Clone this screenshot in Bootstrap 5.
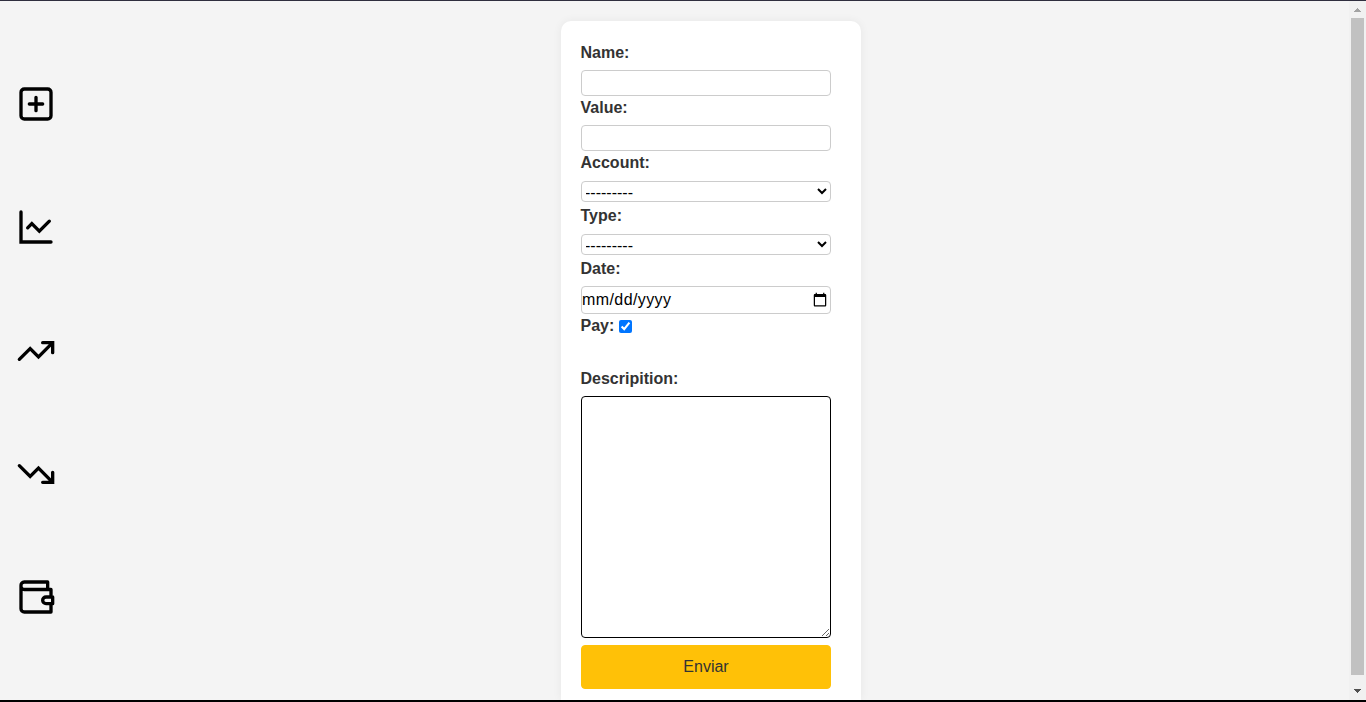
<!DOCTYPE html>
<html lang="en">
<head>
<meta charset="utf-8">
<meta name="viewport" content="width=device-width, initial-scale=1">
<title>New entry</title>
<link href="https://cdn.jsdelivr.net/npm/bootstrap@5.3.0/dist/css/bootstrap.min.css" rel="stylesheet">
<style>
body { font-family: "Liberation Sans", Arial, sans-serif; background: #f4f4f4; color: #333; height: 702px; border-top: 1px solid #2f2e3e; border-bottom: 2px solid #000; }
.side-menu { width: 72px; padding-top: 83px; gap: 83.3px; }
.side-menu svg { width: 40px; height: 40px; fill: none; stroke: #000; stroke-width: 2; stroke-linecap: round; }
.side-menu a { line-height: 0; }
.entry-form { width: 300px; height: 679px; margin: 20px 0 0 489px; padding: 20px 20px 0; background: #fff; border-radius: 10px 10px 0 0; box-shadow: 0 0 10px rgba(0,0,0,.06); }
.entry-form label { line-height: 22px; font-weight: 700; padding-top: 1px; margin: 0 0 6px -.5px; }
.field { width: 250px; border: 1px solid #ccc; border-radius: 4px; background: #fff; color: #000; padding: 1px; display: block; flex: none; }
.text-field { height: 26px; }
.entry-form .select-label { margin-bottom: 7px; }
select.field { height: 21px; margin-bottom: 2px; font-size: 16px; line-height: 19px; padding: 1px 1px 0 0; text-indent: -1px; }
.date-field { height: 28px; padding: 1px 0; letter-spacing: .4px; }
.pay-row { height: 53px; }
.pay-row input { width: 13px; height: 13px; margin: 6px 0 0 4.5px; }
textarea.field { height: 242px; border-color: #000; margin-bottom: 7px; resize: both; }
.send-btn { width: 250px; height: 44px; padding: 0; --bs-btn-color: #333; --bs-btn-border-radius: 4px; }
.scroll-track { width: 17px; background: #f1f1f1; }
.scroll-track svg { width: 17px; height: 17px; flex: none; }
.scroll-thumb { width: 13px; height: 657px; background: #c1c1c1; }
</style>
</head>
<body class="d-flex overflow-hidden">
<nav class="side-menu d-flex flex-column align-items-center flex-shrink-0">
  <a href="#" aria-label="Add"><svg viewBox="0 0 24 24"><rect x="3" y="3" width="18" height="18" rx="2"/><path d="M8 12h8M12 8v8"/></svg></a>
  <a href="#" aria-label="Chart"><svg viewBox="0 0 24 24"><path d="M3 3v18h18M20 8.500l-6 6-4.500-4.500-2.500 2.500"/></svg></a>
  <a href="#" aria-label="Income"><svg viewBox="0 0 24 24"><path d="M22 7l-8.500 8.500-5-5L2 17M16 7h6v6"/></svg></a>
  <a href="#" aria-label="Expenses"><svg viewBox="0 0 24 24"><path d="M22 17l-8.500-8.500-5 5L2 7M16 17h6v-6"/></svg></a>
  <a href="#" aria-label="Wallet"><svg viewBox="0 0 24 24" stroke-linejoin="round"><path d="M21 12V7.500H5a2 2 0 0 1-2-2.250A2 2 0 0 1 5 3h14v4.500M3 5v14a2 2 0 0 0 2 2h16v-5M18 12a2 2 0 0 0 0 4h4v-4Z"/></svg></a>
</nav>
<main class="flex-grow-1">
  <form class="entry-form d-flex flex-column align-items-start">
    <label for="name">Name:</label>
    <input id="name" type="text" class="field text-field">
    <label for="value">Value:</label>
    <input id="value" type="text" class="field text-field">
    <label for="account" class="select-label">Account:</label>
    <select id="account" class="field"><option>---------</option></select>
    <label for="type" class="select-label">Type:</label>
    <select id="type" class="field"><option>---------</option></select>
    <label for="date">Date:</label>
    <input id="date" type="date" class="field date-field">
    <div class="pay-row d-flex align-items-start">
      <label for="pay">Pay:</label><input id="pay" type="checkbox" checked>
    </div>
    <label for="description">Descripition:</label>
    <textarea id="description" class="field"></textarea>
    <button type="button" class="btn btn-warning send-btn flex-shrink-0">Enviar</button>
  </form>
</main>
<div class="scroll-track d-flex flex-column align-items-center flex-shrink-0" aria-hidden="true">
  <svg viewBox="0 0 17 17" shape-rendering="crispEdges"><path d="M5 11h7v-1h-1v-1h-1v-1H9V7H8v1H7v1H6v1H5z" fill="#a3a3a3"/></svg>
  <div class="scroll-thumb"></div>
  <svg class="mt-auto" viewBox="0 0 17 17" shape-rendering="crispEdges"><path d="M5 6h7v1h-1v1h-1v1H9v1H8V9H7V8H6V7H5z" fill="#505050"/></svg>
</div>
<script src="https://cdn.jsdelivr.net/npm/bootstrap@5.3.0/dist/js/bootstrap.bundle.min.js"></script>
</body>
</html>
